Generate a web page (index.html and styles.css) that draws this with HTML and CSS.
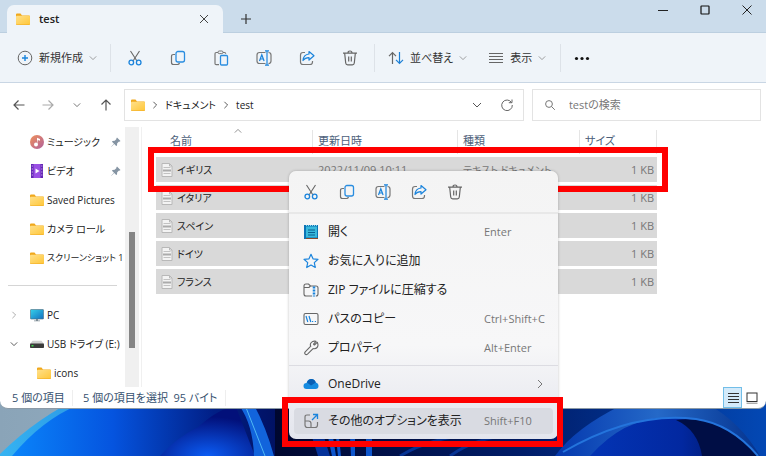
FILE: index.html
```
<!DOCTYPE html>
<html lang="ja">
<head>
  <meta charset="UTF-8">
  <meta name="viewport" content="width=device-width, initial-scale=1.0">
  <title>test</title>
  <link rel="stylesheet" href="styles.css">
</head>
<body>
  <!-- shared icons -->
  <svg class="sprite" aria-hidden="true">
    <defs>
      <linearGradient id="folder-fill" x1="0" y1="0" x2="1" y2="1">
        <stop offset="0" stop-color="#ffe08a"/>
        <stop offset="1" stop-color="#ffc73a"/>
      </linearGradient>
      <linearGradient id="music-fill" x1="0" y1="0" x2="1" y2="1">
        <stop offset="0" stop-color="#f0915a"/>
        <stop offset="1" stop-color="#b0609c"/>
      </linearGradient>
      <linearGradient id="screen-fill" x1="0" y1="0" x2="1" y2="1">
        <stop offset="0" stop-color="#35d0ea"/>
        <stop offset="1" stop-color="#1470c0"/>
      </linearGradient>
    </defs>
    <symbol id="folder" viewBox="0 0 14 12">
      <path d="M0 1.5Q0 .5 1 .5h3.5l1.5 2H13q1 0 1 1v7.500q0 1-1 1H1q-1 0-1-1z" fill="#f0a81c"/>
      <path d="M0 3.500Q0 2.800 1 2.800h12q1 0 1 1v6.700q0 1-1 1H1q-1 0-1-1z" fill="url(#folder-fill)"/>
    </symbol>
    <symbol id="cut" viewBox="0 0 16 16" fill="none">
      <path d="M3.500 1l6.300 9.800M12.500 1L6.200 10.800" stroke="#666" stroke-width="1.100"/>
      <circle cx="4.300" cy="12.500" r="2.300" stroke="#1b84dc" stroke-width="1.300"/>
      <circle cx="11.700" cy="12.500" r="2.300" stroke="#1b84dc" stroke-width="1.300"/>
    </symbol>
    <symbol id="copy" viewBox="0 0 16 16" fill="none">
      <path d="M5 4.500H3.500q-2 0-2 2v6q0 2 2 2h4q1.500 0 2-1.500" stroke="#707070" stroke-width="1.200"/>
      <rect x="6" y="1.500" width="8.500" height="10.500" rx="2" stroke="#2a8de0" stroke-width="1.300"/>
    </symbol>
    <symbol id="paste" viewBox="0 0 16 16" fill="none">
      <path d="M5 2.500H3.200q-1.200 0-1.200 1.200V13.500q0 1.200 1.200 1.200H6M10 2.500h1.500q1.200 0 1.200 1.200" stroke="#777" stroke-width="1.200"/>
      <rect x="5" y="1" width="5" height="2.600" rx="1.200" stroke="#777"/>
      <rect x="7.500" y="5.500" width="7" height="9.500" rx="1" stroke="#2a8de0" stroke-width="1.300"/>
    </symbol>
    <symbol id="rename" viewBox="0 0 16 16" fill="none">
      <path d="M9.500 2.500H3.500q-2.500 0-2.500 2.500v6q0 2.500 2.500 2.500h6M12.500 2.500q2.500 0 2.500 2.500v6q0 2.500-2.500 2.500" stroke="#777" stroke-width="1.200"/>
      <path d="M3.500 11l2.300-6.200L8.100 11M4.300 9h3M9 .8h4M9 15.200h4M11 1v14" stroke="#1b84dc" stroke-width="1.200"/>
    </symbol>
    <symbol id="share" viewBox="0 0 16 16" fill="none">
      <path d="M6 2.500H4q-2.500 0-2.500 2.500v7q0 2.500 2.500 2.500h7q2.500 0 2.500-2.500v-1" stroke="#777" stroke-width="1.200"/>
      <path d="M10 1.500l5 4.200-5 4.300V7.600Q6.200 7.500 4 10.500 4.500 4.500 10 4z" stroke="#1b84dc" stroke-width="1.200" stroke-linejoin="round"/>
    </symbol>
    <symbol id="trash" viewBox="0 0 16 16" fill="none" stroke="#666" stroke-width="1.200">
      <path d="M1 3.200h14M2.700 3.500l1 9.500q.2 1.800 2 1.800h4.600q1.800 0 2-1.800l1-9.500M6 3Q6 1 8 1t2 2M6.700 6.500v5M9.300 6.500v5"/>
    </symbol>
    <symbol id="chevron" viewBox="0 0 10 10" fill="none" stroke="currentColor">
      <path d="M1 3l4 4 4-4"/>
    </symbol>
    <symbol id="arrow" viewBox="0 0 12 12" fill="none" stroke="currentColor" stroke-width="1.200">
      <path d="M11.500 6H1M5.500 1.500L1 6l4.500 4.500"/>
    </symbol>
    <symbol id="pin" viewBox="0 0 10 10">
      <path d="M6 .5L9.500 4l-1 .7-.5-.2L6.200 6.300 6 8.500l-.8.500L3.300 7 .5 9.700.3 9.500 3 6.700 1 4.800l.5-.8 2.200-.2L5.500 2l-.2-.5z" fill="#8594a3"/>
    </symbol>
    <symbol id="doc" viewBox="0 0 12 14">
      <path d="M1 .5h7.500L11 3v10.500H1z" fill="#f3f3f3" stroke="#b8b8b8"/>
      <path d="M8.500.5V3H11" fill="none" stroke="#b8b8b8"/>
      <path d="M2.500 4.500h7M2.500 10.500h7" stroke="#c2c2c2"/>
      <path d="M2 7.500h8" stroke="#ababab" stroke-width="2"/>
    </symbol>
  </svg>

  <main class="window">
    <header class="titlebar">
      <div class="tab">
        <svg class="folder"><use href="#folder"/></svg>
        <span class="tab-title">test</span>
        <button class="icon-btn" aria-label="タブを閉じる">
          <svg class="icon-s" viewBox="0 0 10 10"><path d="M1 1l8 8M9 1L1 9" stroke="#444" fill="none"/></svg>
        </button>
      </div>
      <button class="icon-btn new-tab" aria-label="新しいタブ">
        <svg class="icon-s" viewBox="0 0 10 10"><path d="M5 0v10M0 5h10" stroke="#333" stroke-width="1.200"/></svg>
      </button>
      <div class="window-buttons">
        <button class="icon-btn" aria-label="最小化"><svg class="icon-s" viewBox="0 0 10 10"><path d="M0 5.500h10" stroke="#222"/></svg></button>
        <button class="icon-btn" aria-label="最大化"><svg class="icon-s" viewBox="0 0 10 10"><rect x="1" y="1" width="8" height="8" rx=".5" fill="none" stroke="#111" stroke-width="1.200"/></svg></button>
        <button class="icon-btn" aria-label="閉じる"><svg class="icon-s" viewBox="0 0 10 10"><path d="M.5.500l9 9M9.500.500l-9 9" stroke="#222"/></svg></button>
      </div>
    </header>

    <div class="toolbar">
      <button class="tool new-btn">
        <svg class="icon" viewBox="0 0 16 16" fill="none"><circle cx="8" cy="8" r="6.800" stroke="#666"/><path d="M8 5v6M5 8h6" stroke="#1b84dc" stroke-width="1.400"/></svg>
        新規作成
        <svg class="chevron"><use href="#chevron"/></svg>
      </button>
      <span class="divider"></span>
      <div class="tool-group">
        <button class="tool" aria-label="切り取り"><svg class="icon"><use href="#cut"/></svg></button>
        <button class="tool" aria-label="コピー"><svg class="icon"><use href="#copy"/></svg></button>
        <button class="tool" aria-label="貼り付け"><svg class="icon"><use href="#paste"/></svg></button>
        <button class="tool" aria-label="名前の変更"><svg class="icon"><use href="#rename"/></svg></button>
        <button class="tool" aria-label="共有"><svg class="icon"><use href="#share"/></svg></button>
        <button class="tool" aria-label="削除"><svg class="icon"><use href="#trash"/></svg></button>
      </div>
      <span class="divider"></span>
      <button class="tool">
        <svg class="icon" viewBox="0 0 16 16" fill="none" stroke-width="1.200"><path d="M4.500 14V3M1 6.200L4.500 2.700 8 6.200" stroke="#666"/><path d="M11.500 2v11M8 9.800l3.500 3.500 3.500-3.500" stroke="#1b7fd6"/></svg>
        並べ替え
        <svg class="chevron"><use href="#chevron"/></svg>
      </button>
      <button class="tool view-btn">
        <svg class="icon" viewBox="0 0 16 16"><path d="M1 3.500h14M1 6.500h14M1 9.500h14M1 12.500h14" stroke="#666"/></svg>
        表示
        <svg class="chevron"><use href="#chevron"/></svg>
      </button>
      <span class="divider"></span>
      <button class="tool more-btn" aria-label="もっと見る">
        <svg class="icon" viewBox="0 0 16 16" fill="#111"><circle cx="2.500" cy="8.500" r="1.600"/><circle cx="8" cy="8.500" r="1.600"/><circle cx="13.500" cy="8.500" r="1.600"/></svg>
      </button>
    </div>

    <nav class="navbar">
      <div class="nav-buttons">
        <button class="icon-btn" aria-label="戻る"><svg class="icon-m"><use href="#arrow"/></svg></button>
        <button class="icon-btn forward" aria-label="進む"><svg class="icon-m flip"><use href="#arrow"/></svg></button>
        <button class="icon-btn" aria-label="最近表示した場所"><svg class="icon-xs"><use href="#chevron"/></svg></button>
        <button class="icon-btn" aria-label="上へ"><svg class="icon-m turn-up"><use href="#arrow"/></svg></button>
      </div>
      <div class="address">
        <svg class="folder"><use href="#folder"/></svg>
        <svg class="crumb-sep"><use href="#chevron"/></svg>
        <a href="#">ドキュメント</a>
        <svg class="crumb-sep"><use href="#chevron"/></svg>
        <a href="#">test</a>
        <div class="address-buttons">
          <button class="icon-btn" aria-label="以前の場所"><svg class="icon-s"><use href="#chevron"/></svg></button>
          <button class="icon-btn" aria-label="更新"><svg class="icon-m" viewBox="0 0 12 12" fill="none" stroke="#666"><path d="M10.500 3.500A5.300 5.300 0 1 0 11.300 6M11 .5v3.200H7.800"/></svg></button>
        </div>
      </div>
      <label class="search">
        <svg class="icon-s" viewBox="0 0 10 10" fill="none" stroke="#777"><circle cx="4" cy="4" r="3.400"/><path d="M6.500 6.500L9.800 9.800"/></svg>
        <input type="text" placeholder="testの検索" aria-label="testの検索">
      </label>
    </nav>

    <div class="content">
      <aside class="sidebar">
        <ul class="tree">
          <li>
            <svg class="tree-icon" viewBox="0 0 14 14"><circle cx="7" cy="7" r="7" fill="url(#music-fill)"/><path d="M7 9.500V2.800l3 1.200v1.800L7.800 5" fill="#fff"/><circle cx="6" cy="9.500" r="2" fill="#fff"/></svg>
            ミュージック
            <svg class="pin"><use href="#pin"/></svg>
          </li>
          <li>
            <svg class="tree-icon" viewBox="0 0 14 14"><rect x="1" width="12" height="14" rx="1" fill="#9a50e4"/><path d="M1 0h2.500v14H1zM10.500 0H13v14h-2.500z" fill="#6427b4"/><path d="M2.300 1.500v12M11.800 1.500v12" stroke="#d8bcf4" stroke-dasharray="1 2"/><path d="M5.500 4.500l4 2.500-4 2.500z" fill="#fff"/></svg>
            ビデオ
            <svg class="pin"><use href="#pin"/></svg>
          </li>
          <li><svg class="folder"><use href="#folder"/></svg>Saved Pictures</li>
          <li><svg class="folder"><use href="#folder"/></svg>カメラ ロール</li>
          <li class="long"><svg class="folder"><use href="#folder"/></svg>スクリーンショット 1</li>
        </ul>
        <hr>
        <ul class="tree">
          <li class="has-toggle">
            <svg class="toggle closed"><use href="#chevron"/></svg>
            <svg class="tree-icon" viewBox="0 0 14 14"><rect x=".5" y="1.500" width="13" height="9.500" rx=".5" fill="url(#screen-fill)" stroke="#4b6d80" stroke-width=".6"/><path d="M6 11h2v1.500H6zM4 12.500h6v.8H4z" fill="#7b8a94"/></svg>
            PC
          </li>
          <li class="has-toggle">
            <svg class="toggle"><use href="#chevron"/></svg>
            <svg class="tree-icon" viewBox="0 0 14 14"><path d="M2.500 3.800h9L14 7H0z" fill="#cfcfcf"/><rect y="6.500" width="14" height="4.500" rx=".8" fill="#3b3b3b"/><rect x="1.500" y="8" width="2" height="1.500" fill="#3fd44c"/></svg>
            USB ドライブ (E:)
          </li>
          <li class="child"><svg class="folder"><use href="#folder"/></svg>icons</li>
        </ul>
      </aside>
      <div class="scrollbar"><div class="thumb"></div></div>

      <section class="files">
        <svg class="sort-mark"><use href="#chevron"/></svg>
        <table>
          <thead>
            <tr>
              <th class="col-name">名前</th>
              <th class="col-date">更新日時</th>
              <th class="col-type">種類</th>
              <th class="col-size">サイズ</th>
            </tr>
          </thead>
          <tbody>
            <tr><td class="name"><span class="file"><svg class="doc"><use href="#doc"/></svg>イギリス</span></td><td>2022/11/09 10:11</td><td class="type">テキスト ドキュメント</td><td class="size">1 KB</td></tr>
            <tr><td class="name"><span class="file"><svg class="doc"><use href="#doc"/></svg>イタリア</span></td><td></td><td></td><td class="size">1 KB</td></tr>
            <tr><td class="name"><span class="file"><svg class="doc"><use href="#doc"/></svg>スペイン</span></td><td></td><td></td><td class="size">1 KB</td></tr>
            <tr><td class="name"><span class="file"><svg class="doc"><use href="#doc"/></svg>ドイツ</span></td><td></td><td></td><td class="size">1 KB</td></tr>
            <tr><td class="name"><span class="file"><svg class="doc"><use href="#doc"/></svg>フランス</span></td><td></td><td></td><td class="size">1 KB</td></tr>
          </tbody>
        </table>
      </section>
    </div>

    <footer class="statusbar">
      <span class="count">5 個の項目</span>
      <span class="selected">5 個の項目を選択&ensp;95 バイト</span>
      <div class="view-buttons">
        <button class="view active" aria-label="詳細"><svg class="icon-m" viewBox="0 0 12 12"><path d="M1 1.500h11M1 4.500h11M1 7.500h11M1 10.500h11" stroke="#333"/></svg></button>
        <button class="view" aria-label="大きいアイコン"><svg class="icon-m" viewBox="0 0 12 12"><rect x="1" y="1" width="10" height="8.500" fill="#fff" stroke="#333"/><path d="M.5 11.200h11" stroke="#888"/></svg></button>
      </div>
    </footer>

    <div class="marker marker-file"></div>

    <div class="menu">
      <div class="menu-tools">
        <button class="tool" aria-label="切り取り"><svg class="icon"><use href="#cut"/></svg></button>
        <button class="tool" aria-label="コピー"><svg class="icon"><use href="#copy"/></svg></button>
        <button class="tool" aria-label="名前の変更"><svg class="icon"><use href="#rename"/></svg></button>
        <button class="tool" aria-label="共有"><svg class="icon"><use href="#share"/></svg></button>
        <button class="tool" aria-label="削除"><svg class="icon"><use href="#trash"/></svg></button>
      </div>
      <div class="menu-group">
        <button class="item">
          <svg class="icon" viewBox="0 0 16 16"><rect x="1" y="1" width="14" height="14" fill="#0b73b5"/><rect x="3" y="2.500" width="11" height="11" fill="#39b9dc"/><path d="M5 6h7M5 8.500h7M5 11h7" stroke="#0a6191"/><path d="M3 1.500h11" stroke="#8fd9ee" stroke-dasharray="1 1"/><path d="M3 14.500h12" stroke="#8b4a2b"/></svg>
          <span>開く</span><kbd>Enter</kbd>
        </button>
        <button class="item">
          <svg class="icon" viewBox="0 0 16 16"><path d="M8 1.300l2 4.500 5 .5-3.700 3.300 1 4.900L8 12l-4.300 2.500 1-4.900L1 6.300l5-.5z" fill="none" stroke="#1b84dc" stroke-width="1.200" stroke-linejoin="round"/></svg>
          <span>お気に入りに追加</span>
        </button>
        <button class="item">
          <svg class="icon" viewBox="0 0 16 16" fill="none"><path d="M9 14H3q-2 0-2-2V4q0-2 2-2h2.500L7.500 4H13q2 0 2 2v6q0 2-2 2M1.500 5.500H6l1.500-1.500" stroke="#666" stroke-width="1.100"/><path d="M11 4.500v10" stroke="#1b84dc" stroke-width="2.500" stroke-dasharray="2 1"/></svg>
          <span>ZIP ファイルに圧縮する</span>
        </button>
        <button class="item">
          <svg class="icon" viewBox="0 0 16 16" fill="none"><rect x="1" y="2.500" width="14" height="11" rx="1.500" stroke="#666" stroke-width="1.100"/><path d="M3 5l1.800 6M6 5l1.800 6M9 10.500h1.200M11.800 10.500H13" stroke="#1b84dc" stroke-width="1.200"/></svg>
          <span>パスのコピー</span><kbd>Ctrl+Shift+C</kbd>
        </button>
        <button class="item">
          <svg class="icon" viewBox="0 0 16 16"><path d="M13.800 2.200L11 5l-.3 0-.7-.8L12.500 1.300Q9.500.5 7.800 2.500T7.300 6.200L1.700 11.800q-1 1.200 0 2.300t2.300 0l5.600-5.500q2.300.7 4-1.100t.2-5.300z" transform="translate(.5)" fill="none" stroke="#666" stroke-width="1.100" stroke-linejoin="round"/></svg>
          <span>プロパティ</span><kbd>Alt+Enter</kbd>
        </button>
      </div>
      <div class="menu-group">
        <button class="item">
          <svg class="icon" viewBox="0 0 16 16"><path d="M3.500 13Q.5 13 .5 10T3.500 7Q4.500 3 8.500 3q3.200 0 4.300 3.500Q15.500 7 15.500 10q0 3-3 3z" fill="#168be0"/><path d="M4 6.500Q5 3 8.500 3q3.200 0 4.300 3.500L8 9.500z" fill="#0a5fb4"/></svg>
          <span>OneDrive</span><svg class="submenu"><use href="#chevron"/></svg>
        </button>
      </div>
      <div class="menu-group last">
        <button class="item current">
          <svg class="icon" viewBox="0 0 16 16" fill="none"><path d="M7 2H4Q2 2 2 4v8q0 2.500 2.500 2.500H12q2.500 0 2.500-2.500V9M2 8h3.500Q8 8 8 10.500v4" stroke="#777" stroke-width="1.200"/><path d="M9 7l5.500-5.500M10 1.500h4.500V6" stroke="#1b84dc" stroke-width="1.300"/></svg>
          <span>その他のオプションを表示</span><kbd>Shift+F10</kbd>
        </button>
      </div>
    </div>

    <div class="marker marker-menu"></div>
  </main>

  <svg class="wallpaper" viewBox="0 396 766 60" preserveAspectRatio="none" aria-hidden="true">
    <defs>
      <linearGradient id="sky"><stop offset="0" stop-color="#8aa4b8"/><stop offset="1" stop-color="#b4cad9"/></linearGradient>
      <linearGradient id="petal-left"><stop offset="0" stop-color="#0a84fa"/><stop offset=".35" stop-color="#0554df"/><stop offset=".7" stop-color="#011f86"/><stop offset="1" stop-color="#010c55"/></linearGradient>
      <linearGradient id="edge-left"><stop offset="0" stop-color="#35b3f2"/><stop offset="1" stop-color="#1556c0"/></linearGradient>
      <linearGradient id="right-fill"><stop offset="0" stop-color="#00072f"/><stop offset=".5" stop-color="#001c68"/><stop offset="1" stop-color="#0348b4"/></linearGradient>
      <linearGradient id="arc"><stop offset="0" stop-color="#0438ae"/><stop offset=".5" stop-color="#2569c8"/><stop offset="1" stop-color="#05338e"/></linearGradient>
      <linearGradient id="inner"><stop offset="0" stop-color="#0334b4"/><stop offset=".55" stop-color="#0228a0"/><stop offset="1" stop-color="#000d48"/></linearGradient>
      <radialGradient id="glow" cx=".5" cy="1" r=".8"><stop offset="0" stop-color="#0b5cf4"/><stop offset="1" stop-color="#02107a"/></radialGradient>
    </defs>
    <rect y="396" width="766" height="60" fill="url(#sky)"/>
    <path d="M0 454Q40 415 84 396H300V456H0z" fill="url(#edge-left)"/>
    <path d="M12 456Q42 420 78 405H300V456z" fill="url(#petal-left)"/>
    <path d="M160 456Q176 438 198 427 222 406 236 407L255 456z" fill="url(#glow)"/>
    <path d="M239 405q14 20 15 51h20q-8-29-20-51z" fill="#1264dc"/>
    <path d="M245 405l20 51" stroke="#4fb9f4" fill="none"/>
    <rect x="275" y="396" width="491" height="60" fill="url(#right-fill)"/>
    <path d="M312 437h12l6 19h-12z" fill="#04329a"/>
    <path d="M328 437h5l3 19h-4zM336 437h3l2 19h-3zM350 437h5v19h-4zM366 437h6v19h-6z" fill="#0d55cc"/>
    <path d="M400 456q30-18 70-21M450 456q25-18 60-21" stroke="#063394" stroke-width="3" fill="none"/>
    <path d="M555 456Q575 428 622 405h87Q740 422 760 456H590z" fill="url(#arc)"/>
    <path d="M590 456Q624 418 665 418q55-2 92 38z" fill="url(#inner)"/>
    <path d="M676 420q22 10 26 36h55q-35-42-81-36z" fill="#000e45"/>
    <path d="M563 452q70-41 133-33 35 5 62 37" stroke="#2474dc" stroke-width="2" fill="none"/>
  </svg>
</body>
</html>
```
FILE: styles.css
```
* {
  margin: 0;
  padding: 0;
  box-sizing: border-box;
}
body {
  display: flex;
  flex-direction: column;
  min-height: 100vh;
  font-family: "Open Sans", "Noto Sans CJK JP", sans-serif;
  font-size: 11px;
  line-height: 16px;
  font-feature-settings: "palt";
  color: #222;
  background: #011f86;
}
button, input {
  font: inherit;
  font-feature-settings: inherit;
  color: inherit;
  border: none;
  background: none;
}
a {
  color: inherit;
  text-decoration: none;
}
ul {
  list-style: none;
}
svg {
  flex: none;
}
.sprite {
  position: absolute;
  width: 0;
  height: 0;
}
.window {
  position: relative;
  z-index: 1;
  background: #fff;
  border-radius: 0 0 8px 8px;
  border-bottom: 1px solid #8c9aa6;
}
.wallpaper {
  flex: 1;
  width: 100%;
  min-height: 55px;
  margin-top: -13px;
}

/* icon sizes */
.icon {
  width: 16px;
  height: 16px;
}
.icon-m {
  width: 12px;
  height: 12px;
}
.icon-s {
  width: 10px;
  height: 10px;
}
.icon-xs, .chevron, .crumb-sep {
  width: 8px;
  height: 8px;
}
.folder {
  width: 14px;
  height: 12px;
}
.icon-btn {
  display: flex;
  align-items: center;
  justify-content: center;
  width: 20px;
  height: 20px;
  color: #555;
}

/* title bar */
.titlebar {
  display: flex;
  height: 33px;
  background: #cbdceb;
  border-bottom: 1px solid #bccfe0;
}
.tab {
  display: flex;
  align-items: center;
  gap: 9px;
  width: 216px;
  height: 28px;
  margin: 5px 0 0 7px;
  padding: 0 9px;
  background: #eff4f9;
  border-radius: 7px 7px 0 0;
}
.tab-title {
  flex: 1;
  font-weight: 600;
}
.new-tab {
  margin: 9px 0 0 13px;
}
.window-buttons {
  display: flex;
  gap: 22px;
  margin-left: auto;
  padding-right: 9px;
}

/* command bar */
.toolbar {
  display: flex;
  align-items: center;
  height: 50px;
  padding-left: 17px;
  color: #333;
  background: #eff4f9;
  border-bottom: 1px solid #c9d6e4;
}
.tool {
  display: flex;
  align-items: center;
  gap: 6px;
}
.chevron {
  color: #888;
}
.new-btn {
  width: 93px;
}
.divider {
  width: 1px;
  height: 28px;
  background: #dde2e8;
}
.tool-group {
  display: flex;
  gap: 27px;
  padding: 0 16px;
}
.tool-group + .divider {
  margin-right: 13px;
}
.view-btn {
  margin: 0 14px 0 21px;
}
.more-btn {
  margin-left: 13px;
}

/* address row */
.navbar {
  display: flex;
  align-items: center;
  gap: 8px;
  padding: 6px 5px 5px 9px;
}
.nav-buttons {
  display: flex;
  gap: 9px;
  width: 107px;
}
.forward {
  color: #aaa;
}
.flip {
  transform: rotate(180deg);
}
.turn-up {
  transform: rotate(90deg);
}
.address, .search {
  display: flex;
  align-items: center;
  height: 32px;
  border: 1px solid #e3e3e3;
}
.address {
  flex: 19;
  gap: 6px;
  padding: 0 6px;
  font-size: 10px;
}
.crumb-sep {
  color: #333;
  transform: rotate(-90deg);
}
.address-buttons {
  display: flex;
  gap: 10px;
  margin-left: auto;
}
.search {
  flex: 10;
  gap: 14px;
  padding: 0 12px;
}
.search input {
  flex: 1;
  min-width: 0;
  outline: none;
}
.search input::placeholder {
  color: #777;
}

/* folder tree */
.content {
  display: flex;
  padding-top: 1px;
}
.sidebar {
  width: 125px;
  overflow: hidden;
  font-size: 10px;
  white-space: nowrap;
}
.tree li {
  display: flex;
  align-items: center;
  gap: 3px;
  height: 29px;
  padding-left: 30px;
}
.tree .has-toggle {
  padding-left: 10px;
}
.tree .child {
  padding-left: 37px;
}
.tree .long {
  font-size: 9px;
}
.tree-icon {
  width: 14px;
  height: 14px;
}
.pin {
  width: 10px;
  height: 10px;
  margin: 0 4px 0 auto;
}
.toggle {
  width: 8px;
  height: 8px;
  margin-right: 9px;
  color: #333;
}
.toggle.closed {
  color: #999;
  transform: rotate(-90deg);
}
.sidebar hr {
  margin: 13px 8px 14px;
  border: none;
  border-top: 1px solid #d5d5d5;
}
.scrollbar {
  display: flex;
  width: 14px;
  padding: 105px 4px 39px;
  background: #f0f0f0;
}
.thumb {
  flex: 1;
  background: #858585;
}

/* file list */
.files {
  position: relative;
  flex: 1;
  margin-left: 2px;
  padding: 0 109px 0 14px;
  border-left: 1px solid #f0f0f0;
}
.sort-mark {
  position: absolute;
  left: 92px;
  width: 8px;
  height: 8px;
  color: #777;
  transform: rotate(180deg);
}
table {
  width: 100%;
  table-layout: fixed;
  border-collapse: separate;
  border-spacing: 0 3px;
}
th {
  height: 24px;
  padding: 0 0 3px 5px;
  border-right: 1px solid #e5e5e5;
  font-weight: 400;
  text-align: left;
  color: #4c607a;
}
.col-name {
  width: 157px;
  padding-left: 14px;
}
.col-date {
  width: 145px;
}
.col-type {
  width: 122px;
}
td {
  height: 25px;
  padding-left: 5px;
  background: #d9d9d9;
  color: #777;
  white-space: nowrap;
}
.name {
  color: #222;
}
.file {
  display: flex;
  align-items: center;
  gap: 4px;
}
.file, .type {
  font-size: 10px;
}
.doc {
  width: 12px;
  height: 14px;
}
.size {
  padding-right: 3px;
  text-align: right;
}

/* status bar */
.statusbar {
  display: flex;
  align-items: center;
  height: 21px;
  padding: 0 5px 0 12px;
  color: #35506e;
}
.count {
  width: 61px;
  border-right: 1px solid #eee;
}
.selected {
  padding: 0 8px 0 10px;
  border-right: 1px solid #eee;
}
.view-buttons {
  display: flex;
  margin-left: auto;
}
.view {
  display: flex;
  align-items: center;
  justify-content: center;
  width: 19px;
  height: 21px;
}
.view.active {
  background: #d3eafa;
  border: 1px solid #72bee8;
}

/* context menu */
.menu {
  position: absolute;
  top: 171px;
  left: 289px;
  width: 269px;
  background: linear-gradient(#f4f4f4 0, #f7f7f8 65%, #e3e5ed 100%);
  border-radius: 7px;
  box-shadow: 0 0 3px rgba(0, 0, 0, 0.25);
  font-size: 12px;
}
.menu-tools {
  display: flex;
  gap: 20px;
  height: 43px;
  padding-left: 14px;
  border-bottom: 2px solid #e8e8e8;
}
.menu-group {
  padding: 3px 5px;
}
.menu-group + .menu-group {
  border-top: 1px solid #dcdce2;
}
.menu-group.last {
  padding: 6px 5px 5px;
}
.item {
  display: flex;
  align-items: center;
  gap: 9px;
  width: 100%;
  height: 29px;
  padding: 0 8px 0 9px;
  border-radius: 4px;
  text-align: left;
  white-space: nowrap;
}
.item span {
  flex: 1;
}
.item kbd {
  width: 61px;
  font-family: inherit;
  font-size: 11px;
  color: #777;
}
.item.current {
  height: 26px;
  background: #d9dbe2;
}
.submenu {
  width: 10px;
  height: 10px;
  color: #777;
  transform: rotate(-90deg);
}

/* red frames */
.marker {
  position: absolute;
  border: 6px solid #f00;
}
.marker-file {
  top: 147px;
  left: 148px;
  width: 520px;
  height: 45px;
}
.marker-menu {
  top: 397px;
  left: 282px;
  width: 281px;
  height: 50px;
}
```
